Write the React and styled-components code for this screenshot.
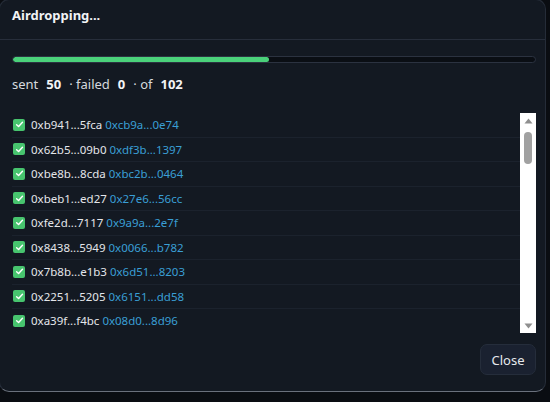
import React from "react";
import styled, { createGlobalStyle } from "styled-components";

const Global = createGlobalStyle`
  html, body { margin: 0; padding: 0; background: #0a0d12; }
  body { font-family: "Noto Sans", "Open Sans", Arial, sans-serif; overflow: hidden; }
  * { box-sizing: border-box; }
`;

const Dialog = styled.div`
  width: 547px;
  height: 393px;
  margin: -1px 0 0 -1px;
  background: #131922;
  border: 1px solid #252c38;
  border-bottom-color: #6a707c;
  border-radius: 10px;
  display: flex;
  flex-direction: column;
  overflow: hidden;
`;

const Header = styled.div`
  height: 40px;
  padding: 7px 12px 0;
  border-bottom: 1px solid #272e3b;
`;

const Title = styled.h2`
  margin: 0;
  font-size: 13px;
  line-height: 16px;
  font-weight: 700;
  color: #f1f3f5;
`;

const Body = styled.div`
  flex: 1;
  padding: 16px 9px 0 12px;
  display: flex;
  flex-direction: column;
`;

const Track = styled.div`
  height: 7px;
  border-radius: 4px;
  background: #0a0e14;
  border: 1px solid #2b3240;
  overflow: hidden;
`;

const Fill = styled.div`
  height: 100%;
  background: #4ad17a;
  border-radius: 4px;
`;

const Stats = styled.div`
  margin-top: 12px;
  font-size: 13px;
  line-height: 18px;
  color: #d6d9de;
  display: flex;
  gap: 7px;
`;

const Num = styled.b`
  color: #f3f4f6;
  font-weight: 700;
  margin: 0 1px;
`;

const ListWrap = styled.div`
  margin-top: 20px;
  height: 220px;
  display: flex;
`;

const Rows = styled.div`
  flex: 1;
  overflow: hidden;
`;

const Rail = styled.div`
  width: 16px;
  flex: none;
  background: #ffffff;
  display: flex;
  flex-direction: column;
`;

const ArrowBtn = styled.div`
  height: 15px;
  display: flex;
  align-items: center;
  justify-content: center;
`;

const ThumbArea = styled.div`
  flex: 1;
  padding: 4px 4px 0 4px;
`;

const Thumb = styled.div`
  height: 32px;
  border-radius: 5px;
  background: #a1a1a1;
`;

const Row = styled.div`
  height: 24.5px;
  border-bottom: 1px solid #1b222d;
  display: flex;
  align-items: center;
  padding-left: 1px;
  font-size: 11.5px;
  white-space: nowrap;
`;

const Box = styled.span`
  width: 12px;
  height: 12px;
  border-radius: 2px;
  background: #47c46e;
  display: inline-flex;
  align-items: center;
  justify-content: center;
  margin-right: 6px;
  flex: none;
`;

const From = styled.span`
  color: #e4e6ea;
  margin-right: 3px;
`;

const To = styled.span`
  color: #3a9fd5;
`;

const Footer = styled.div`
  margin-top: 11px;
  display: flex;
  justify-content: flex-end;
`;

const Button = styled.button`
  width: 56px;
  height: 31px;
  border-radius: 7px;
  background: #1a2130;
  border: 1px solid #252d3b;
  color: #e6e8ec;
  font-family: inherit;
  font-size: 13px;
  padding: 0;
`;

const first = [
  ["0xb941...5fca", "0xcb9a...0e74"],
  ["0x62b5...09b0", "0xdf3b...1397"],
  ["0xbe8b...8cda", "0xbc2b...0464"],
  ["0xbeb1...ed27", "0x27e6...56cc"],
  ["0xfe2d...7117", "0x9a9a...2e7f"],
  ["0x8438...5949", "0x0066...b782"],
  ["0x7b8b...e1b3", "0x6d51...8203"],
  ["0x2251...5205", "0x6151...dd58"],
  ["0xa39f...f4bc", "0x08d0...8d96"],
];

const Check = () => (
  <svg width="9" height="9" viewBox="0 0 10 10">
    <path d="M1.8 5.2 L4 7.3 L8.3 2.6" fill="none" stroke="#fff" strokeWidth="1.6" strokeLinecap="round" strokeLinejoin="round" />
  </svg>
);

const Tri = ({ down }) => (
  <svg width="9" height="6" viewBox="0 0 9 6">
    <path d={down ? "M0.5 0.5 L8.5 0.5 L4.5 5.5 Z" : "M0.5 5.5 L8.5 5.5 L4.5 0.5 Z"} fill="#8f8f8f" />
  </svg>
);

export default function App() {
  return (
    <>
      <Global />
      <Dialog>
        <Header>
          <Title>Airdropping...</Title>
        </Header>
        <Body>
          <Track>
            <Fill style={{ width: `${(50 / 102) * 100}%` }} />
          </Track>
          <Stats>
            <span>sent</span>
            <Num>50</Num>
            <span>· failed</span>
            <Num>0</Num>
            <span>· of</span>
            <Num>102</Num>
          </Stats>
          <ListWrap>
            <Rows>
              {first.map(([a, b], i) => (
                <Row key={i}>
                  <Box><Check /></Box>
                  <From>{a}</From>
                  <To>{b}</To>
                </Row>
              ))}
            </Rows>
            <Rail>
              <ArrowBtn><Tri /></ArrowBtn>
              <ThumbArea><Thumb /></ThumbArea>
              <ArrowBtn><Tri down /></ArrowBtn>
            </Rail>
          </ListWrap>
          <Footer>
            <Button>Close</Button>
          </Footer>
        </Body>
      </Dialog>
    </>
  );
}
